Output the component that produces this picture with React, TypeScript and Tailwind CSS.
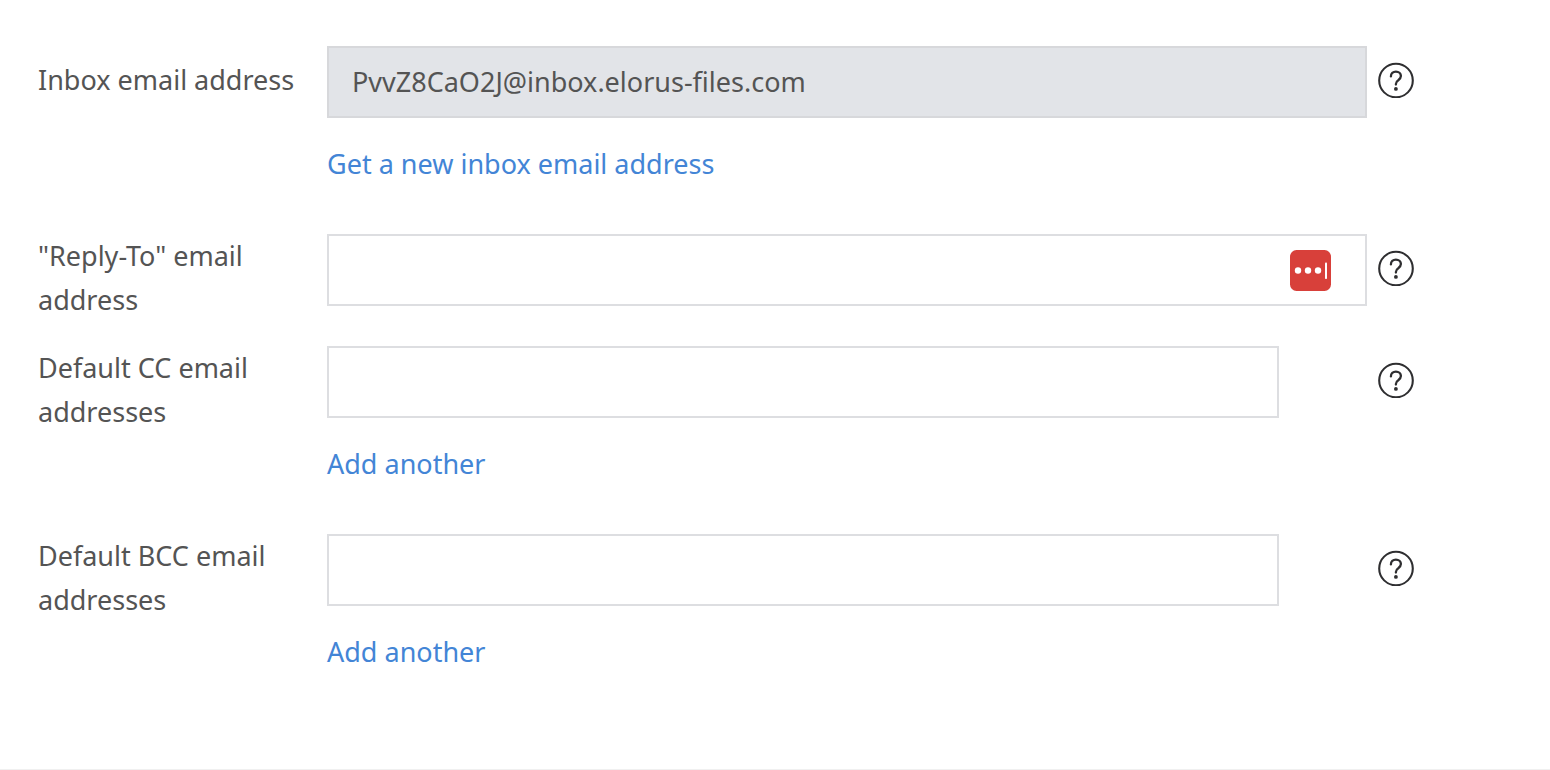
import { useId, useState, type ReactNode } from 'react';

function HelpButton({ topic }: { topic: string }) {
  return (
    <button type="button" aria-label={`Help: ${topic}`} className="ml-[11px] mt-4 size-9 shrink-0 text-[#2e2e30]">
      <svg viewBox="0 0 36 36" className="size-9" fill="none" stroke="currentColor" strokeLinecap="round">
        <circle cx="18" cy="18.5" r="16.8" strokeWidth="2.1" />
        <path d="M12.9 14.4C12.9 11.5 15 9.6 17.9 9.6c2.9 0 5 1.8 5 4.5 0 2-1.1 3-2.6 4.1-1.6 1.1-2.4 1.9-2.4 3.8v.6" strokeWidth="2.3" />
        <circle cx="17.9" cy="26.9" r="1.9" fill="currentColor" stroke="none" />
      </svg>
    </button>
  );
}

function PasswordManagerIcon() {
  return (
    <svg viewBox="0 0 41 41" className="size-[41px]" aria-hidden="true">
      <rect width="41" height="41" rx="6.5" fill="#d8403a" />
      <g fill="#fff">
        <circle cx="8" cy="20.5" r="3.2" />
        <circle cx="18" cy="20.5" r="3.2" />
        <circle cx="28" cy="20.5" r="3.2" />
        <rect x="35" y="12.5" width="2" height="16.5" rx=".8" />
      </g>
    </svg>
  );
}

interface RowProps {
  label: string;
  value?: string;
  readOnly?: boolean;
  inset?: boolean;
  action?: string;
  adornment?: ReactNode;
}

function FieldRow({ label, value = '', readOnly = false, inset = false, action, adornment }: RowProps) {
  const id = useId();
  const [text, setText] = useState(value);
  return (
    <div className="flex items-start">
      <div className={readOnly ? 'w-[289px] shrink-0 pr-6 pt-3' : 'w-[289px] shrink-0 pr-6'}>
        <label htmlFor={id} className="block">{label}</label>
      </div>
      <div className={inset ? 'min-w-0 flex-1 pr-[88px]' : 'min-w-0 flex-1'}>
        <div className="relative">
          <input
            id={id}
            type="email"
            value={text}
            readOnly={readOnly}
            onChange={(e) => setText(e.target.value)}
            className={
              readOnly
                ? 'block h-[72px] w-full border-2 border-[#d7d8db] bg-[#e2e4e8] px-[23px] pb-0.5 outline-none'
                : 'block h-[72px] w-full border-2 border-[#dddee1] bg-white px-[23px] pb-0.5 outline-none'
            }
          />
          {adornment && <span className="absolute inset-y-0 right-9 flex items-center">{adornment}</span>}
        </div>
        {action && (
          <a href="#" className="mb-6 mt-6 block w-fit text-[#4385d6]">{action}</a>
        )}
      </div>
      <HelpButton topic={label} />
    </div>
  );
}

export default function App() {
  return (
    <main className="border-b border-[#f0f0f0] bg-white font-['Noto_Sans',sans-serif] text-[27px] leading-[44px] text-[#545454]">
      <form className="flex flex-col gap-6 pb-[71px] pl-[38px] pr-[136px] pt-[46px]">
        <FieldRow label="Inbox email address" value="PvvZ8CaO2J@inbox.elorus-files.com" readOnly action="Get a new inbox email address" />
        <FieldRow label={'"Reply-To" email address'} adornment={<PasswordManagerIcon />} />
        <FieldRow label="Default CC email addresses" inset action="Add another" />
        <FieldRow label="Default BCC email addresses" inset action="Add another" />
      </form>
    </main>
  );
}
